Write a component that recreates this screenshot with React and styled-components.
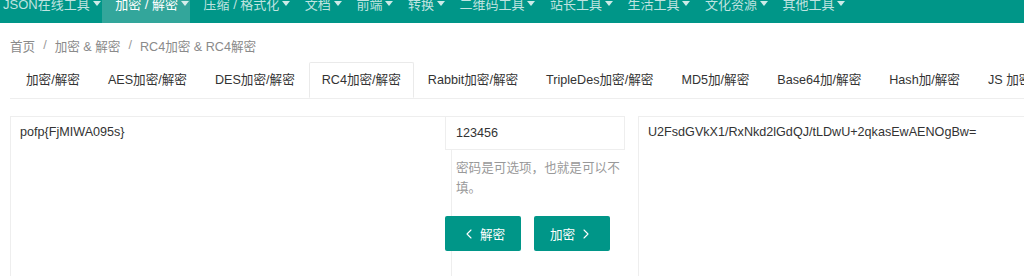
import React from 'react'
import styled, { createGlobalStyle } from 'styled-components'
import { ChevronLeft, ChevronRight } from 'lucide-react'

const GlobalStyle = createGlobalStyle`
  body {
    margin: 0;
    background: #fff;
    font-family: "Liberation Sans", "Noto Sans CJK SC", sans-serif;
    overflow: hidden;
  }
`

const Nav = styled.ul`
  display: flex;
  margin: 0;
  padding: 0;
  list-style: none;
  height: 23px;
  background: #009688;
  overflow: hidden;
`

const NavItem = styled.li`
  display: flex;
  align-items: flex-start;
  height: 23px;
  padding: 0 1px 0 ${p => (p.$first ? '3px' : '13.5px')};
  line-height: 9px;
  font-size: 13px;
  white-space: nowrap;
  color: ${p => (p.$active ? '#fff' : 'rgba(255,255,255,0.75)')};
  background: ${p => (p.$active ? '#33a69b' : 'transparent')};
`

const Caret = styled.span`
  width: 0;
  height: 0;
  margin: 1px 0 0 3px;
  border-left: 4px solid transparent;
  border-right: 4px solid transparent;
  border-top: 5px solid rgba(255, 255, 255, 0.8);
`

const Page = styled.div`
  padding: 0 0 0 10px;
`

const Breadcrumb = styled.div`
  display: flex;
  align-items: center;
  height: 20px;
  margin-top: 12px;
  font-size: 12.6px;
  color: #8a8a8a;
`

const Sep = styled.span`
  margin: 0 8px;
  color: #999;
`

const Tabs = styled.ul`
  display: flex;
  margin: 7px 0 0;
  padding: 0;
  list-style: none;
  height: 36px;
  border-bottom: 1px solid #eee;
`

const Tab = styled.li`
  flex: none;
  height: 36px;
  padding: 0 ${p => (p.$active ? '12px' : '13px')};
  line-height: 35px;
  font-size: 12.6px;
  color: #333;
  white-space: nowrap;
  box-sizing: border-box;
  border: 1px solid ${p => (p.$active ? '#eaeaea' : 'transparent')};
  border-bottom-color: ${p => (p.$active ? '#fff' : 'transparent')};
  border-radius: 2px 2px 0 0;
  background: #fff;
  &:first-child {
    padding-left: 15px;
  }
`

const Body = styled.div`
  display: flex;
  align-items: flex-start;
  margin-top: 17px;
`

const TextArea = styled.div`
  flex: none;
  box-sizing: border-box;
  width: ${p => p.$width}px;
  height: 200px;
  padding: 5px 9px;
  border: 1px solid #eee;
  font-size: 12.6px;
  line-height: 20px;
  color: #333;
  white-space: nowrap;
`

const Middle = styled.div`
  flex: none;
  position: relative;
  z-index: 1;
  width: 180px;
  margin: 0 13px 0 -7px;
`

const Input = styled.div`
  box-sizing: border-box;
  height: 34px;
  padding: 0 10px;
  border: 1px solid #eee;
  background: #fff;
  line-height: 32px;
  font-size: 12.6px;
  color: #333;
`

const Hint = styled.div`
  margin: 8px 0 0 11px;
  font-size: 12.6px;
  line-height: 20px;
  color: #999;
`

const Buttons = styled.div`
  display: flex;
  gap: 13px;
  margin-top: 18px;
`

const Button = styled.button`
  display: flex;
  align-items: center;
  justify-content: center;
  gap: 3px;
  width: 76px;
  height: 35px;
  padding: 0;
  border: none;
  border-radius: 2px;
  background: #009688;
  color: #fff;
  font-family: inherit;
  font-size: 12.6px;
`

const navItems = ['JSON在线工具', '加密 / 解密', '压缩 / 格式化', '文档', '前端', '转换', '二维码工具', '站长工具', '生活工具', '文化资源', '其他工具']
const tabs = ['加密/解密', 'AES加密/解密', 'DES加密/解密', 'RC4加密/解密', 'Rabbit加密/解密', 'TripleDes加密/解密', 'MD5加/解密', 'Base64加/解密', 'Hash加/解密', 'JS 加密/解密']

export default function App() {
  return (
    <>
      <GlobalStyle />
      <Nav>
        {navItems.map((t, i) => (
          <NavItem key={t} $first={i === 0} $active={i === 1}>
            {t}
            <Caret />
          </NavItem>
        ))}
      </Nav>
      <Page>
        <Breadcrumb>
          <span>首页</span>
          <Sep>/</Sep>
          <span>加密 &amp; 解密</span>
          <Sep>/</Sep>
          <span>RC4加密 &amp; RC4解密</span>
        </Breadcrumb>
        <Tabs>
          {tabs.map((t, i) => (
            <Tab key={t} $active={i === 3}>{t}</Tab>
          ))}
        </Tabs>
        <Body>
          <TextArea $width={442}>pofp{'{'}FjMIWA095s{'}'}</TextArea>
          <Middle>
            <Input>123456</Input>
            <Hint>密码是可选项，也就是可以不填。</Hint>
            <Buttons>
              <Button><ChevronLeft size={16} strokeWidth={1.6} /> 解密</Button>
              <Button>加密 <ChevronRight size={16} strokeWidth={1.6} /></Button>
            </Buttons>
          </Middle>
          <TextArea $width={500}>U2FsdGVkX1/RxNkd2lGdQJ/tLDwU+2qkasEwAENOgBw=</TextArea>
        </Body>
      </Page>
    </>
  )
}
